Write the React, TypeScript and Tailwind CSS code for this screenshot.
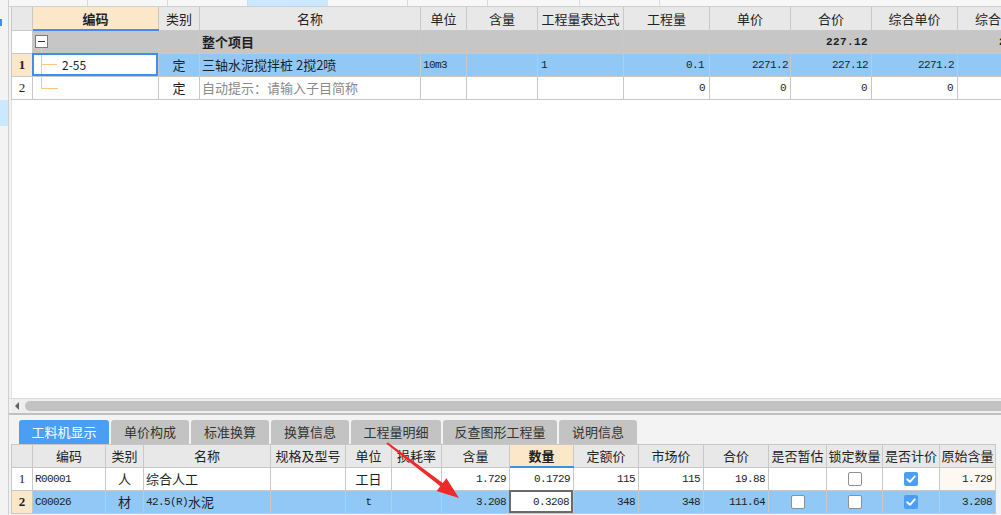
import React from 'react';

const MONO = "font-['Liberation_Mono',monospace] text-[11px] tracking-[-0.6px]";
const SERIF = "font-['Liberation_Serif',serif] text-[13px]";

type CP = { w: string; cls?: string; children?: React.ReactNode };

function Cell({ w, cls = '', children }: CP) {
  return (
    <div
      className={`${w} shrink-0 h-full border-r border-[#c8c8c8] flex items-center relative whitespace-nowrap ${cls}`}
    >
      {children}
    </div>
  );
}

function Num({ v, bold = false }: { v: string; bold?: boolean }) {
  return (
    <span className={`${MONO} ${bold ? 'font-bold tracking-[0.4px]' : ''}`}>{v}</span>
  );
}

function CheckBox({ checked }: { checked: boolean }) {
  if (checked) {
    return (
      <div className="w-[14px] h-[14px] rounded-[2px] bg-[#4a9ff5] flex items-center justify-center">
        <svg width="14" height="14" viewBox="0 0 14 14">
          <path d="M3.2 7.2 L5.9 9.8 L10.8 4.4" stroke="#ffffff" strokeWidth="2" fill="none" strokeLinecap="round" strokeLinejoin="round" />
        </svg>
      </div>
    );
  }
  return <div className="w-[14px] h-[14px] rounded-[2px] bg-white border border-[#8f8f8f]" />;
}

const M = [
  'w-[21px]',
  'w-[126px]',
  'w-[41px]',
  'w-[221px]',
  'w-[46px]',
  'w-[71px]',
  'w-[86px]',
  'w-[86px]',
  'w-[81px]',
  'w-[81px]',
  'w-[86px]',
  'w-[87px]',
];

const L = [
  'w-[21px]',
  'w-[73px]',
  'w-[38px]',
  'w-[127px]',
  'w-[75px]',
  'w-[46px]',
  'w-[50px]',
  'w-[68px]',
  'w-[64px]',
  'w-[65px]',
  'w-[65px]',
  'w-[65px]',
  'w-[58px]',
  'w-[56px]',
  'w-[57px]',
  'w-[56px]',
];

const mainHeaders = ['', '编码', '类别', '名称', '单位', '含量', '工程量表达式', '工程量', '单价', '合价', '综合单价', '综合合价'];
const lowHeaders = ['', '编码', '类别', '名称', '规格及型号', '单位', '损耗率', '含量', '数量', '定额价', '市场价', '合价', '是否暂估', '锁定数量', '是否计价', '原始含量'];

const ROW = 'flex h-[23px] border-b border-l border-[#c8c8c8] w-max shrink-0';
const TREE = 'absolute bg-[#f6c886]';

function MainTable() {
  return (
    <div className="flex flex-col">
      {/* header */}
      <div className="flex h-[24px] border-b border-l border-[#c8c8c8] bg-[#e8e8e8] w-max shrink-0 text-[13px] text-[#222]">
        {mainHeaders.map((h, i) => (
          <Cell key={i} w={M[i]} cls={`justify-center ${i === 1 ? 'bg-[#fde7c9] font-bold' : ''}`}>
            {h}
            {i === 1 && <div className="absolute left-0 right-[-1px] bottom-[-1px] h-[2px] bg-[#3d8ef0]" />}
          </Cell>
        ))}
      </div>
      {/* summary row */}
      <div className={`${ROW} bg-[#c6c6c6] text-[13px]`}>
        <Cell w={M[0]} cls="bg-white" />
        <Cell w={M[1]}>
          <div className="absolute left-[2px] top-[4px] w-[13px] h-[13px] border border-[#7a7a7a] bg-white flex items-center justify-center">
            <div className="w-[7px] h-[1px] bg-[#333]" />
          </div>
          <div className={`${TREE} left-[8px] top-[17px] bottom-0 w-[1px]`} />
        </Cell>
        <Cell w={M[2]} />
        <Cell w={M[3]} cls="pl-[2px] font-bold">整个项目</Cell>
        <Cell w={M[4]} />
        <Cell w={M[5]} />
        <Cell w={M[6]} />
        <Cell w={M[7]} />
        <Cell w={M[8]} />
        <Cell w={M[9]} cls="justify-end pr-[3px]"><Num v="227.12" bold /></Cell>
        <Cell w={M[10]} />
        <Cell w={M[11]} cls="justify-end pr-[3px]"><Num v="227.12" bold /></Cell>
      </div>
      {/* row 1 */}
      <div className={`${ROW} bg-[#91c8f5] text-[13px]`}>
        <Cell w={M[0]} cls={`justify-center bg-[#fde7c9] font-bold ${SERIF}`}>1</Cell>
        <Cell w={M[1]} cls="bg-white">
          <div className={`${TREE} left-[8px] top-0 bottom-0 w-[1px]`} />
          <div className={`${TREE} left-[8px] top-[10px] w-[16px] h-[1px]`} />
          <span className="pl-[29px] text-[12px]">2-55</span>
          <div className="absolute left-[-1px] top-[-1px] right-0 bottom-0 border-2 border-[#3d8ef0]" />
        </Cell>
        <Cell w={M[2]} cls="justify-center">定</Cell>
        <Cell w={M[3]} cls="pl-[2px]">三轴水泥搅拌桩 2搅2喷</Cell>
        <Cell w={M[4]} cls="pl-[2px]"><Num v="10m3" /></Cell>
        <Cell w={M[5]} />
        <Cell w={M[6]} cls="pl-[3px]"><Num v="1" /></Cell>
        <Cell w={M[7]} cls="justify-end pr-[5px]"><Num v="0.1" /></Cell>
        <Cell w={M[8]} cls="justify-end pr-[2px]"><Num v="2271.2" /></Cell>
        <Cell w={M[9]} cls="justify-end pr-[3px]"><Num v="227.12" /></Cell>
        <Cell w={M[10]} cls="justify-end pr-[3px]"><Num v="2271.2" /></Cell>
        <Cell w={M[11]} cls="justify-end pr-[3px]"><Num v="227.12" /></Cell>
      </div>
      {/* row 2 */}
      <div className={`${ROW} bg-white text-[13px]`}>
        <Cell w={M[0]} cls={`justify-center ${SERIF}`}>2</Cell>
        <Cell w={M[1]}>
          <div className={`${TREE} left-[8px] top-0 h-[11px] w-[1px]`} />
          <div className={`${TREE} left-[8px] top-[11px] w-[17px] h-[1px]`} />
        </Cell>
        <Cell w={M[2]} cls="justify-center">定</Cell>
        <Cell w={M[3]} cls="pl-[2px] text-[#8a8a8a]">自动提示：请输入子目简称</Cell>
        <Cell w={M[4]} />
        <Cell w={M[5]} />
        <Cell w={M[6]} />
        <Cell w={M[7]} cls="justify-end pr-[4px]"><Num v="0" /></Cell>
        <Cell w={M[8]} cls="justify-end pr-[4px]"><Num v="0" /></Cell>
        <Cell w={M[9]} cls="justify-end pr-[4px]"><Num v="0" /></Cell>
        <Cell w={M[10]} cls="justify-end pr-[4px]"><Num v="0" /></Cell>
        <Cell w={M[11]} cls="justify-end pr-[4px]"><Num v="0" /></Cell>
      </div>
    </div>
  );
}

function LowerTable() {
  return (
    <div className="flex flex-col">
      <div className="flex h-[24px] border-t border-b border-l border-[#c8c8c8] bg-[#e8e8e8] w-max shrink-0 text-[13px] text-[#222]">
        {lowHeaders.map((h, i) => (
          <Cell key={i} w={L[i]} cls={`justify-center ${i === 8 ? 'bg-[#fde7c9] font-bold' : ''}`}>
            {h}
            {i === 8 && <div className="absolute left-0 right-[-1px] bottom-[-1px] h-[2px] bg-[#3d8ef0]" />}
          </Cell>
        ))}
      </div>
      {/* row 1 */}
      <div className={`${ROW} bg-white text-[13px]`}>
        <Cell w={L[0]} cls={`justify-center ${SERIF}`}>1</Cell>
        <Cell w={L[1]} cls="pl-[2px]"><Num v="R00001" /></Cell>
        <Cell w={L[2]} cls="justify-center">人</Cell>
        <Cell w={L[3]} cls="pl-[2px]">综合人工</Cell>
        <Cell w={L[4]} />
        <Cell w={L[5]} cls="justify-center">工日</Cell>
        <Cell w={L[6]} />
        <Cell w={L[7]} cls="justify-end pr-[3px]"><Num v="1.729" /></Cell>
        <Cell w={L[8]} cls="justify-end pr-[3px]"><Num v="0.1729" /></Cell>
        <Cell w={L[9]} cls="justify-end pr-[3px]"><Num v="115" /></Cell>
        <Cell w={L[10]} cls="justify-end pr-[3px]"><Num v="115" /></Cell>
        <Cell w={L[11]} cls="justify-end pr-[3px]"><Num v="19.88" /></Cell>
        <Cell w={L[12]} />
        <Cell w={L[13]} cls="justify-center"><CheckBox checked={false} /></Cell>
        <Cell w={L[14]} cls="justify-center"><CheckBox checked /></Cell>
        <Cell w={L[15]} cls="justify-end pr-[3px] bg-[#fdf9f2]"><Num v="1.729" /></Cell>
      </div>
      {/* row 2 */}
      <div className={`${ROW} bg-[#91c8f5] text-[13px]`}>
        <Cell w={L[0]} cls={`justify-center bg-[#fde7c9] font-bold ${SERIF}`}>2</Cell>
        <Cell w={L[1]} cls="pl-[2px]"><Num v="C00026" /></Cell>
        <Cell w={L[2]} cls="justify-center">材</Cell>
        <Cell w={L[3]} cls="pl-[2px]">
          <Num v="42.5(R)" />
          <span>水泥</span>
        </Cell>
        <Cell w={L[4]} />
        <Cell w={L[5]} cls="justify-center"><Num v="t" /></Cell>
        <Cell w={L[6]} />
        <Cell w={L[7]} cls="justify-end pr-[3px]"><Num v="3.208" /></Cell>
        <Cell w={L[8]} cls="justify-end pr-[4px] bg-white">
          <Num v="0.3208" />
          <div className="absolute left-[-1px] top-[-1px] right-0 bottom-0 border-2 border-[#6b6b6b]" />
        </Cell>
        <Cell w={L[9]} cls="justify-end pr-[3px]"><Num v="348" /></Cell>
        <Cell w={L[10]} cls="justify-end pr-[3px]"><Num v="348" /></Cell>
        <Cell w={L[11]} cls="justify-end pr-[3px]"><Num v="111.64" /></Cell>
        <Cell w={L[12]} cls="justify-center"><CheckBox checked={false} /></Cell>
        <Cell w={L[13]} cls="justify-center"><CheckBox checked={false} /></Cell>
        <Cell w={L[14]} cls="justify-center"><CheckBox checked /></Cell>
        <Cell w={L[15]} cls="justify-end pr-[3px]"><Num v="3.208" /></Cell>
      </div>
    </div>
  );
}

const tabs = [
  { t: '工料机显示', w: 'w-[90px]', active: true },
  { t: '单价构成', w: 'w-[78px]' },
  { t: '标准换算', w: 'w-[78px]' },
  { t: '换算信息', w: 'w-[78px]' },
  { t: '工程量明细', w: 'w-[90px]' },
  { t: '反查图形工程量', w: 'w-[114px]' },
  { t: '说明信息', w: 'w-[78px]' },
];

export default function App() {
  return (
    <div className="w-[1001px] h-[515px] overflow-hidden bg-[#f3f3f3] flex relative text-[#1e1e1e] font-['Noto_Sans_CJK_SC','Noto_Sans',sans-serif]">
      {/* left sidebar */}
      <div className="w-[9px] h-full border-r border-[#cfcfcf] flex flex-col shrink-0">
        <div className="h-[19px]" />
        <div className="h-[7px] w-[2px] bg-[#3d8ef0]" />
        <div className="h-[74px]" />
        <div className="h-[26px] bg-[#cce8ff]" />
      </div>

      {/* main */}
      <div className="flex-1 flex flex-col min-w-0 overflow-hidden">
        {/* top strip */}
        <div className="h-[7px] flex border-b border-[#cfcfcf] bg-[#f7f7f7] shrink-0">
          <div className="w-[79px] border-r border-[#dadada]" />
          <div className="w-[80px] border-r border-[#dadada]" />
          <div className="w-[80px] border-r border-[#dadada]" />
          <div className="w-[80px] bg-[#cce8ff]" />
          <div className="w-[80px] border-r border-[#dadada]" />
          <div className="w-[80px] border-r border-[#dadada]" />
          <div className="w-[92px] border-r border-[#dadada]" />
          <div className="w-[80px] border-r border-[#dadada]" />
          <div className="flex-1" />
        </div>

        {/* main panel */}
        <div className="h-[392px] flex pl-[2px] shrink-0 border-b border-[#dadada]">
          <div className="flex-1 flex flex-col bg-white min-w-0 overflow-hidden">
            <MainTable />
            <div className="flex-1 border-l border-[#e3e3e3]" />
          </div>
        </div>

        {/* horizontal scrollbar */}
        <div className="h-[14px] flex pl-[2px] shrink-0">
          <div className="flex-1 flex items-start pt-[2px] bg-[#eeeeee]">
            <div className="w-[14px] h-[10px] flex items-center pl-[4px]">
              <div className="w-0 h-0 border-y-[4px] border-y-transparent border-r-[4px] border-r-[#606060]" />
            </div>
            <div className="flex-1 h-[10px] rounded-l-[5px] bg-[#c2c2c2]" />
          </div>
        </div>
        <div className="h-[2px] bg-[#c0c0c0] shrink-0" />

        {/* tabs */}
        <div className="h-[29px] flex items-end pl-[10px] gap-[2px] shrink-0">
          {tabs.map((tb) => (
            <div
              key={tb.t}
              className={`${tb.w} h-[24px] rounded-t-[3px] flex items-center justify-center text-[13px] ${
                tb.active ? 'bg-[#4a9ff5] text-white' : 'bg-[#c3c3c3] text-[#333]'
              }`}
            >
              {tb.t}
            </div>
          ))}
        </div>

        {/* lower table */}
        <div className="flex-1 flex pl-[2px] min-h-0">
          <LowerTable />
        </div>
      </div>

      {/* red annotation arrow */}
      <svg className="absolute left-0 top-0 pointer-events-none" width="1001" height="515" viewBox="0 0 1001 515">
        <polygon
          points="386.4,443.8 387.6,442.2 442.7,483.0 446.4,478.2 459,498 436.6,491.0 440.3,486.2"
          fill="#ef2a2a"
        />
      </svg>
    </div>
  );
}
